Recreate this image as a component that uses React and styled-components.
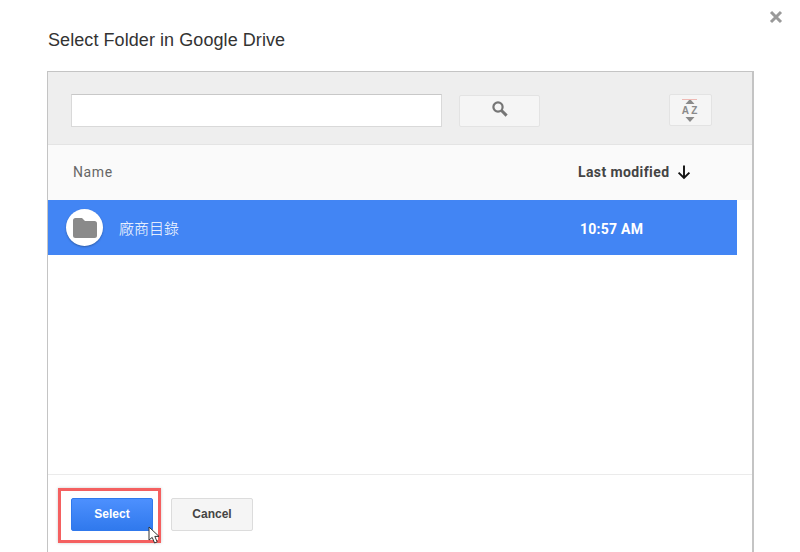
import React from 'react';
import styled, { createGlobalStyle } from 'styled-components';

const GlobalStyle = createGlobalStyle`
  html, body {
    margin: 0;
    padding: 0;
    width: 800px;
    height: 552px;
    overflow: hidden;
    background: #fff;
  }
`;

const App = () => {
  return (
    <Dialog>
      <GlobalStyle />
      <Title>Select Folder in Google Drive</Title>
      <CloseButton>
        <svg width="14" height="14" viewBox="0 0 14 14">
          <path d="M2 2 L12 12 M12 2 L2 12" stroke="#999" strokeWidth="3" fill="none" />
        </svg>
      </CloseButton>
      <Panel>
        <Toolbar>
          <SearchInput />
          <SearchButton>
            <svg width="18" height="18" viewBox="0 0 18 18">
              <circle cx="7" cy="7" r="4.6" fill="none" stroke="#757575" strokeWidth="2.2" />
              <path d="M10.5 10.5 L15.6 15.6" stroke="#757575" strokeWidth="3" fill="none" />
            </svg>
          </SearchButton>
          <SortButton>
            <SortLine />
            <svg width="10" height="5" viewBox="0 0 10 5">
              <path d="M5 0 L9.5 5 L0.5 5 Z" fill="#8a8a8a" />
            </svg>
            <SortLetters>A Z</SortLetters>
            <svg width="10" height="5" viewBox="0 0 10 5">
              <path d="M0.5 0 L9.5 0 L5 5 Z" fill="#8a8a8a" />
            </svg>
          </SortButton>
        </Toolbar>
        <ListHeader>
          <NameColumn>Name</NameColumn>
          <ModifiedColumn>
            Last modified
            <svg width="16" height="16" viewBox="0 0 16 16">
              <path d="M8 1.5 L8 14 M2.6 8.6 L8 14 L13.4 8.6" stroke="#111" strokeWidth="1.9" fill="none" />
            </svg>
          </ModifiedColumn>
        </ListHeader>
        <List>
          <FolderRow>
            <FolderName>
              <FolderBadge>
                <svg width="24" height="20" viewBox="0 0 24 20">
                  <path
                    d="M2.5 0 H9 L12 3 H21.5 A2.5 2.5 0 0 1 24 5.5 V17.5 A2.5 2.5 0 0 1 21.5 20 H2.5 A2.5 2.5 0 0 1 0 17.5 V2.5 A2.5 2.5 0 0 1 2.5 0 Z"
                    fill="#8a8a8a"
                  />
                </svg>
              </FolderBadge>
              <FolderLabel>廠商目錄</FolderLabel>
            </FolderName>
            <FolderTime>10:57 AM</FolderTime>
          </FolderRow>
        </List>
        <Footer>
          <SelectButton>Select</SelectButton>
          <CancelButton>Cancel</CancelButton>
          <Highlight />
          <Pointer>
            <svg width="15" height="19" viewBox="0 0 15 19">
              <path
                d="M1 1 L1 14 L4.2 11.4 L6.6 17 L9.2 15.9 L6.8 10.4 L11 10.4 Z"
                fill="#fff"
                stroke="#333"
                strokeWidth="1"
              />
            </svg>
          </Pointer>
        </Footer>
      </Panel>
    </Dialog>
  );
};

// Styled Components

const Dialog = styled.div`
  position: relative;
  width: 800px;
  height: 552px;
  padding: 29px 46px 0 47px;
  box-sizing: border-box;
  overflow: hidden;
  background: #fff;
`;

const Title = styled.div`
  height: 42px;
  padding: 1px 0 0 1px;
  box-sizing: border-box;
  font-family: 'Liberation Sans', Arial, sans-serif;
  font-size: 18px;
  letter-spacing: 0.07px;
  line-height: 21px;
  color: #333;
`;

const CloseButton = styled.div`
  position: absolute;
  top: 10px;
  right: 17px;
  display: flex;
`;

const Panel = styled.div`
  display: flex;
  flex-direction: column;
  height: 481px;
  box-sizing: border-box;
  border: 1px solid #c4c4c4;
  border-width: 1px 2px 0 1px;
  font-family: Roboto, 'Liberation Sans', sans-serif;
`;

const Toolbar = styled.div`
  display: flex;
  flex: none;
  align-items: center;
  height: 73px;
  box-sizing: border-box;
  padding: 5px 40px 0 23px;
  background: #eeeeee;
  border-bottom: 1px solid #e4e4e4;
`;

const SearchInput = styled.div`
  width: 371px;
  height: 33px;
  box-sizing: border-box;
  background: #fff;
  border: 1px solid #d9d9d9;
  border-top-color: #c8c8c8;
`;

const ToolButton = styled.div`
  display: flex;
  box-sizing: border-box;
  background: #f5f5f5;
  border: 1px solid #e3e3e3;
  border-radius: 2px;
`;

const SearchButton = styled(ToolButton)`
  width: 81px;
  height: 32px;
  margin: 1px 0 0 17px;
  align-items: center;
  justify-content: center;
  padding: 0 0 4px 1px;
`;

const SortButton = styled(ToolButton)`
  position: relative;
  width: 43px;
  height: 32px;
  margin: -1px 0 0 auto;
  padding-right: 2px;
  flex-direction: column;
  align-items: center;
  justify-content: center;
  gap: 1px;
`;

const SortLine = styled.div`
  position: absolute;
  top: 4px;
  left: 12px;
  width: 15px;
  height: 1px;
  background: #eeb9b4;
`;

const SortLetters = styled.div`
  font-family: 'Liberation Sans', Arial, sans-serif;
  font-size: 10px;
  font-weight: 700;
  line-height: 11px;
  color: #8a8a8a;
`;

const ListHeader = styled.div`
  display: flex;
  flex: none;
  align-items: center;
  height: 55px;
  box-sizing: border-box;
  padding: 0 0 2px 25px;
  background: #fafafa;
`;

const NameColumn = styled.div`
  width: 505px;
  font-size: 14px;
  letter-spacing: 0.6px;
  color: #666;
`;

const ModifiedColumn = styled.div`
  display: flex;
  align-items: center;
  gap: 7px;
  font-size: 14px;
  font-weight: 700;
  letter-spacing: 0.4px;
  color: #444;
`;

const List = styled.div`
  flex: 1;
  background: #fff;
  border-bottom: 1px solid #ebebeb;
`;

const FolderRow = styled.div`
  display: flex;
  align-items: center;
  width: 689px;
  height: 55px;
  background: #4285f4;
  color: #fff;
`;

const FolderName = styled.div`
  display: flex;
  align-items: center;
  width: 532px;
  padding-left: 18px;
  box-sizing: border-box;
  gap: 16px;
  font-family: Roboto, 'Noto Sans CJK TC', sans-serif;
  font-size: 15px;
`;

const FolderLabel = styled.span`
  font-weight: 300;
`;

const FolderBadge = styled.div`
  display: flex;
  align-items: center;
  justify-content: center;
  width: 37px;
  height: 37px;
  border-radius: 50%;
  background: #fff;
  box-shadow: 0 1px 2px rgba(0, 0, 0, 0.3);
`;

const FolderTime = styled.div`
  padding-top: 2px;
  font-size: 14px;
  font-weight: 700;
  letter-spacing: 0.25px;
`;

const Footer = styled.div`
  position: relative;
  display: flex;
  flex: none;
  align-items: flex-start;
  gap: 18px;
  height: 77px;
  box-sizing: border-box;
  padding: 23px 0 0 23px;
  background: #fff;
`;

const ActionButton = styled.div`
  display: flex;
  align-items: center;
  justify-content: center;
  box-sizing: border-box;
  width: 82px;
  height: 33px;
  border-radius: 2px;
  font-family: 'Liberation Sans', Arial, sans-serif;
  font-size: 12px;
  font-weight: 700;
  padding-bottom: 2px;
`;

const SelectButton = styled(ActionButton)`
  color: #fff;
  background: linear-gradient(#4d90fe, #3079ed);
  border: 1px solid #3079ed;
`;

const CancelButton = styled(ActionButton)`
  color: #444;
  background: #f5f5f5;
  border: 1px solid #dcdcdc;
`;

const Highlight = styled.div`
  position: absolute;
  left: 10px;
  top: 13px;
  width: 103px;
  height: 55px;
  box-sizing: border-box;
  border: 3px solid #f46060;
  box-shadow: 0 0 3px rgba(0, 0, 0, 0.2);
`;

const Pointer = styled.div`
  position: absolute;
  left: 100px;
  top: 51px;
  display: flex;
`;

export default App;
